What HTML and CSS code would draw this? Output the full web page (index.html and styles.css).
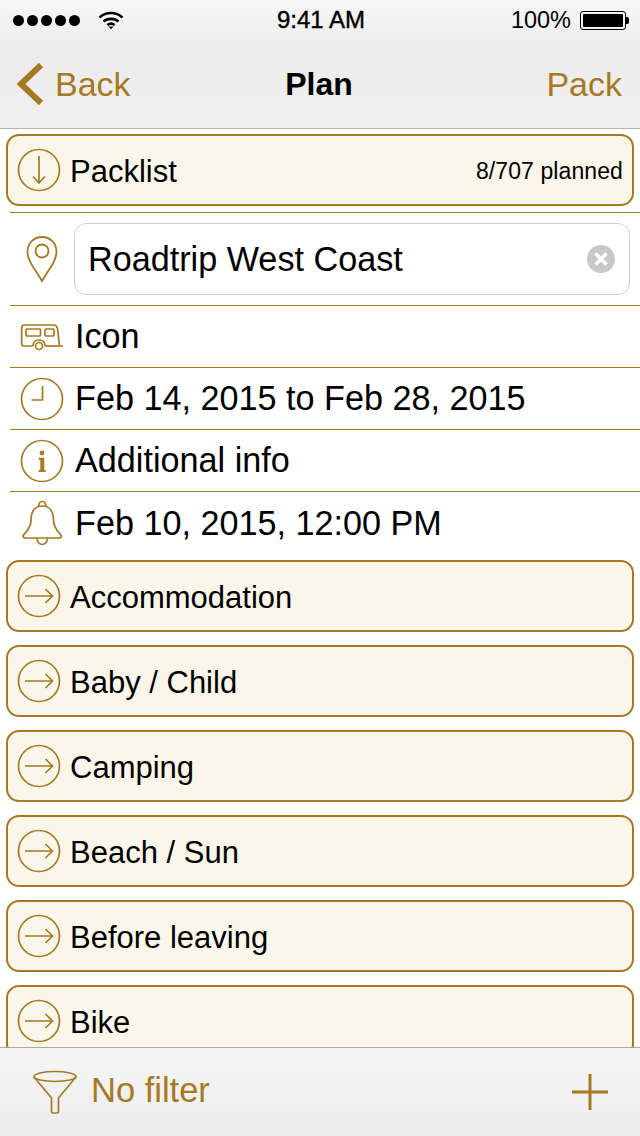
FILE: index.html
```html
<!DOCTYPE html>
<html lang="en">
<head>
  <meta charset="UTF-8">
  <meta name="viewport" content="width=device-width, initial-scale=1.0">
  <title>Plan</title>
  <link rel="stylesheet" href="styles.css">
</head>
<body>
  <div class="screen">
    <header class="top-bar">
      <div class="status-bar">
        <div class="status-left">
          <div class="signal"><i></i><i></i><i></i><i></i><i></i></div>
          <svg class="wifi" width="26" height="20" viewBox="0 0 26 20" fill="none" stroke="#000" stroke-width="2.6">
            <path d="M1.5 7.5C8 1.5 18 1.5 24.5 7.5"/>
            <path d="M5.5 11.5C9.5 8 16.5 8 20.5 11.5"/>
            <path d="M9.3 15C11.5 13.4 14.5 13.4 16.7 15"/>
            <path d="M10.5 16.5L13 19.2L15.5 16.5Z" fill="#000" stroke="none"/>
          </svg>
        </div>
        <div class="status-time">9:41 AM</div>
        <div class="status-right">
          <span>100%</span>
          <div class="battery"><div class="battery-fill"></div></div>
          <div class="battery-tip"></div>
        </div>
      </div>
      <nav class="nav-bar">
        <a href="#" class="nav-back">
          <svg width="28" height="44" viewBox="0 0 28 44" fill="none" stroke="#a57a22" stroke-width="6">
            <path d="M25 3L5 22L25 41"/>
          </svg>
          Back
        </a>
        <h1 class="nav-title">Plan</h1>
        <a href="#" class="nav-action">Pack</a>
      </nav>
    </header>

    <main class="content">
      <div class="card first-card">
        <svg class="card-icon" width="44" height="44" viewBox="0 0 44 44" fill="none" stroke="#a57a22" stroke-width="1.7">
          <circle cx="22" cy="22" r="20.5"/>
          <path d="M22 8V35M16 28.5L22 35L28 28.5"/>
        </svg>
        <span class="card-label">Packlist</span>
        <span class="card-count">8/707 planned</span>
      </div>

      <div class="detail-list">
        <div class="detail-row name-row">
          <svg class="detail-icon" width="44" height="48" viewBox="0 0 44 48" fill="none" stroke="#a57a22" stroke-width="1.8">
            <path d="M22 46C15 34 7.5 26 7.5 16.5C7.5 8 14 2 22 2C30 2 36.5 8 36.5 16.5C36.5 26 29 34 22 46Z"/>
            <circle cx="22" cy="16" r="6.5"/>
          </svg>
          <div class="name-field">
            <span>Roadtrip West Coast</span>
            <span class="clear-btn">
              <svg width="28" height="28" viewBox="0 0 28 28" stroke="#fff" stroke-width="3.4">
                <path d="M8.5 8.5L19.5 19.5M19.5 8.5L8.5 19.5"/>
              </svg>
            </span>
          </div>
        </div>
        <div class="detail-row">
          <svg class="detail-icon" width="44" height="28" viewBox="0 0 44 28" fill="none" stroke="#a57a22" stroke-width="1.7">
            <path d="M13 23H4C2.5 23 1.7 22 1.7 20.5V4.5C1.7 3 2.7 2 4.2 2H34C36 2 37 3.5 37.5 5.5L39.5 23H43"/>
            <path d="M25 23H39.5"/>
            <rect x="6" y="6" width="14.5" height="7" rx="1"/>
            <rect x="25" y="6" width="9" height="7" rx="1"/>
            <path d="M13 23C13 19 15.5 17 19 17C22.5 17 25 19 25 23"/>
            <circle cx="19" cy="23" r="3.5"/>
          </svg>
          <span>Icon</span>
        </div>
        <div class="detail-row">
          <svg class="detail-icon" width="44" height="44" viewBox="0 0 44 44" fill="none" stroke="#a57a22" stroke-width="1.7">
            <circle cx="22" cy="22" r="20.5"/>
            <path d="M22.5 9V23H11.5"/>
          </svg>
          <span>Feb 14, 2015 to Feb 28, 2015</span>
        </div>
        <div class="detail-row">
          <svg class="detail-icon" width="44" height="44" viewBox="0 0 44 44" fill="none" stroke="#a57a22" stroke-width="1.7">
            <circle cx="22" cy="22" r="20.5"/>
            <circle cx="22" cy="14" r="2.4" fill="#a57a22" stroke="none"/>
            <path d="M18.7 18.7H24.3V31H25.7V33H18.7V31H20.3V20.7H18.7Z" fill="#a57a22" stroke="none"/>
          </svg>
          <span>Additional info</span>
        </div>
        <div class="detail-row last-row">
          <svg class="detail-icon" width="44" height="46" viewBox="0 0 44 46" fill="none" stroke="#a57a22" stroke-width="1.7">
            <path d="M18.5 7C18.5 3.5 20 1.5 22.3 1.5C24.6 1.5 26 3.5 26 7"/>
            <path d="M22.3 6C13.5 6 11 13 11 20C11 28 6.5 31.5 3.5 35C2.5 36.5 3.5 38 5.5 38H39C41 38 42 36.5 41 35C38 31.5 33.5 28 33.5 20C33.5 13 31 6 22.3 6Z"/>
            <path d="M17 38C17 42 19.5 44.5 22.3 44.5C25 44.5 27.5 42 27.5 38"/>
          </svg>
          <span>Feb 10, 2015, 12:00 PM</span>
        </div>
      </div>

      <div class="category-list">
        <div class="card">
          <svg class="card-icon" width="44" height="44" viewBox="0 0 44 44" fill="none" stroke="#a57a22" stroke-width="1.7">
            <circle cx="22" cy="22" r="20.5"/>
            <path d="M8 22H35.5M28.5 15L35.5 22L28.5 29"/>
          </svg>
          <span class="card-label">Accommodation</span>
        </div>
        <div class="card">
          <svg class="card-icon" width="44" height="44" viewBox="0 0 44 44" fill="none" stroke="#a57a22" stroke-width="1.7">
            <circle cx="22" cy="22" r="20.5"/>
            <path d="M8 22H35.5M28.5 15L35.5 22L28.5 29"/>
          </svg>
          <span class="card-label">Baby / Child</span>
        </div>
        <div class="card">
          <svg class="card-icon" width="44" height="44" viewBox="0 0 44 44" fill="none" stroke="#a57a22" stroke-width="1.7">
            <circle cx="22" cy="22" r="20.5"/>
            <path d="M8 22H35.5M28.5 15L35.5 22L28.5 29"/>
          </svg>
          <span class="card-label">Camping</span>
        </div>
        <div class="card">
          <svg class="card-icon" width="44" height="44" viewBox="0 0 44 44" fill="none" stroke="#a57a22" stroke-width="1.7">
            <circle cx="22" cy="22" r="20.5"/>
            <path d="M8 22H35.5M28.5 15L35.5 22L28.5 29"/>
          </svg>
          <span class="card-label">Beach / Sun</span>
        </div>
        <div class="card">
          <svg class="card-icon" width="44" height="44" viewBox="0 0 44 44" fill="none" stroke="#a57a22" stroke-width="1.7">
            <circle cx="22" cy="22" r="20.5"/>
            <path d="M8 22H35.5M28.5 15L35.5 22L28.5 29"/>
          </svg>
          <span class="card-label">Before leaving</span>
        </div>
        <div class="card">
          <svg class="card-icon" width="44" height="44" viewBox="0 0 44 44" fill="none" stroke="#a57a22" stroke-width="1.7">
            <circle cx="22" cy="22" r="20.5"/>
            <path d="M8 22H35.5M28.5 15L35.5 22L28.5 29"/>
          </svg>
          <span class="card-label">Bike</span>
        </div>
      </div>
    </main>

    <footer class="bottom-bar">
      <div class="filter">
        <svg width="46" height="44" viewBox="0 0 46 44" fill="none" stroke="#a57a22" stroke-width="1.7">
          <ellipse cx="23" cy="6.5" rx="21" ry="5"/>
          <path d="M2 7L19.5 28V41.5C19.5 42.5 20 43 21 43H25C26 43 26.5 42.5 26.5 41.5V28L44 7"/>
        </svg>
        <span class="filter-label">No filter</span>
      </div>
      <svg class="add-btn" width="36" height="36" viewBox="0 0 36 36" stroke="#a57a22" stroke-width="3">
        <path d="M18 0V36M0 18H36"/>
      </svg>
    </footer>
  </div>
</body>
</html>
```

FILE: styles.css
```css
* {
  box-sizing: border-box;
}
html, body {
  margin: 0;
  height: 100%;
}
body {
  font-family: "Liberation Sans", Arial, sans-serif;
  background-color: #fff;
  color: #000;
}
.screen {
  display: flex;
  flex-direction: column;
  width: 640px;
  height: 1136px;
  overflow: hidden;
}
.top-bar {
  flex: none;
  height: 129px;
  background: linear-gradient(#f7f7f7, #ececec 40%, #f0f0f0);
  border-bottom: 1px solid #b4b4b6;
}
.status-bar {
  display: grid;
  grid-template-columns: 1fr auto 1fr;
  align-items: center;
  height: 40px;
  padding: 0 11px 0 13px;
  font-size: 24px;
}
.status-left {
  display: flex;
  align-items: center;
  gap: 18px;
}
.signal {
  display: flex;
  gap: 3px;
}
.signal i {
  width: 11px;
  height: 11px;
  border-radius: 50%;
  background: #000;
}
.status-time {
  -webkit-text-stroke: 0.4px #000;
}
.status-right {
  display: flex;
  align-items: center;
  justify-content: flex-end;
}
.status-right span {
  margin-right: 9px;
  font-size: 23.5px;
}
.battery {
  width: 46px;
  height: 19px;
  padding: 2px;
  border: 1px solid #000;
  border-radius: 3px;
}
.battery-fill {
  height: 100%;
  background: #000;
  border-radius: 1px;
}
.battery-tip {
  width: 3px;
  height: 7px;
  background: #000;
  border-radius: 0 2px 2px 0;
}
.nav-bar {
  display: grid;
  grid-template-columns: 1fr auto 1fr;
  align-items: center;
  height: 88px;
  padding: 0 18px 0 16px;
  font-size: 34px;
}
.nav-bar a {
  color: #a57a22;
  text-decoration: none;
}
.nav-back {
  display: flex;
  align-items: center;
  gap: 11px;
}
.nav-title {
  margin: 0;
  font-size: 32px;
  font-weight: bold;
}
.nav-action {
  justify-self: end;
}
.content {
  flex: 1;
  min-height: 0;
  overflow: hidden;
  background: #fff;
}
.card {
  display: flex;
  align-items: center;
  flex: none;
  width: 628px;
  height: 72px;
  margin-left: 6px;
  padding: 0 9px;
  background: #fbf6ea;
  border: 2px solid #a57a22;
  border-radius: 13px;
  font-size: 31px;
}
.first-card {
  margin-top: 5px;
}
.card-icon {
  flex: none;
  margin-right: 9px;
}
.card-label {
  padding-top: 3px;
}
.card-count {
  margin-left: auto;
  padding-top: 2px;
  font-size: 23px;
  letter-spacing: 0.1px;
}
.detail-list {
  margin: 6px 0 0 10px;
  border-top: 1px solid #a57a22;
}
.detail-row {
  display: flex;
  align-items: center;
  height: 62px;
  border-bottom: 1px solid #a57a22;
  font-size: 34.2px;
}
.name-row {
  height: 93px;
}
.last-row {
  border-bottom: none;
}
.detail-icon {
  flex: none;
  width: 44px;
  margin: 0 11px 0 10px;
}
.name-row .detail-icon {
  margin-right: 10px;
}
.name-field {
  display: flex;
  align-items: center;
  justify-content: space-between;
  width: 556px;
  height: 72px;
  padding: 0 14px 0 13px;
  background: #fff;
  border: 1px solid #cfcfcf;
  border-radius: 12px;
}
.clear-btn {
  display: flex;
  width: 28px;
  height: 28px;
  background: #c8c8c8;
  border-radius: 50%;
}
.category-list {
  display: flex;
  flex-direction: column;
  gap: 13px;
  margin-top: 6px;
}
.bottom-bar {
  flex: none;
  display: flex;
  align-items: center;
  justify-content: space-between;
  height: 89px;
  padding: 0 32px;
  background: linear-gradient(#f6f6f6, #ececec);
  border-top: 1px solid #b0a898;
}
.filter {
  display: flex;
  align-items: center;
  gap: 13px;
  color: #a57a22;
  font-size: 34.5px;
}
.filter-label {
  margin-top: -4px;
}
```
